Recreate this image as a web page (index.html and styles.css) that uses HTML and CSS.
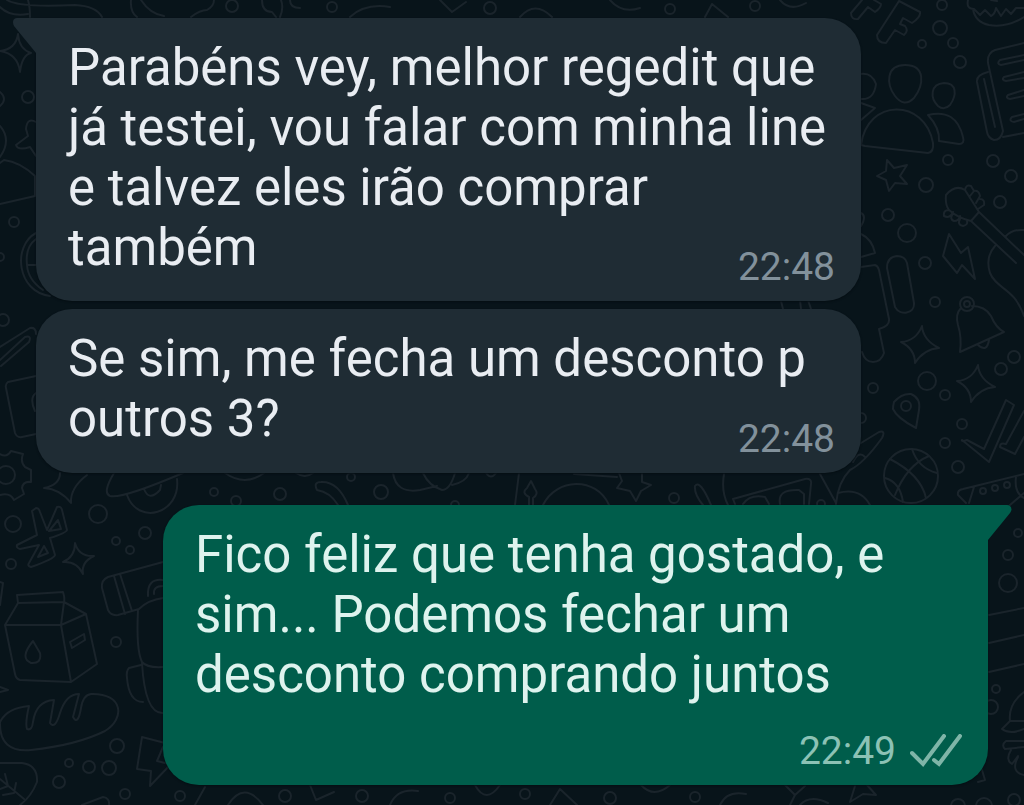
FILE: index.html
```html
<!DOCTYPE html>
<html lang="pt-BR">
<head>
<meta charset="utf-8">
<meta name="viewport" content="width=device-width, initial-scale=1">
<title>Conversa</title>
<link rel="stylesheet" href="styles.css">
</head>
<body>
<main class="chat">
  <svg class="wallpaper" viewBox="0 0 1024 805" preserveAspectRatio="xMidYMid slice" aria-hidden="true">
    <defs>
      <path id="spark" d="M2-19Q3-5 19 3Q4 4-5 18Q-5 4-19-3Q-4-4 2-19Z"/>
    </defs>
    <!-- top edge -->
    <path d="M0 7Q10 17 28 14M28 0Q30 7 30 17M7 0Q20 8 75 5Q96 6 102 17M131 0Q130 12 137 17M141 0Q150 14 164 16M191 17Q200 10 207 10Q214 6 214 0M262 0Q262 12 272 12L276 17M281 0Q284 8 280 17M290 0Q290 8 300 8M350 17Q365 3 390 7M440 0L452 12L466 2M520 17Q535 0 552 17M610 0Q622 14 640 8M705 17L712 4L728 17M780 0Q790 12 806 3"/>
    <circle cx="232" cy="6" r="6"/><circle cx="332" cy="7" r="5"/><circle cx="490" cy="8" r="6"/><circle cx="670" cy="9" r="5"/><circle cx="755" cy="6" r="5"/>
    <!-- letters -->
    <path d="M862 0L851 13Q851 20 858 19L868 7L875 12Q881 8 881 4L874 0M899 1L877 35Q877 43 886 43L895 30L904 35Q909 31 905 26L900 24L903 18L912 23Q921 17 920 12Z"/>
    <!-- cupcake -->
    <path d="M968 0Q966 9 974 9L980 15L985 10L991 16Q995 14 996 8L1001 16L1006 9L1011 14L1016 8H1024M973 9Q975 22 989 25Q1007 28 1024 17M991 0L997 1"/>
    <circle cx="942" cy="5" r="5"/><circle cx="940" cy="28" r="7"/><circle cx="922" cy="44" r="4"/><circle cx="953" cy="43" r="5"/><circle cx="960" cy="62" r="6"/>
    <!-- people -->
    <path d="M905 65C886 65 886 84 895 96Q904 108 914 98C924 85 926 65 905 65ZM861 145C867 98 925 98 933 143Q934 152 928 153L865 146ZM944 83C930 84 930 98 938 106Q944 111 950 105C957 95 957 83 944 83ZM928 115Q956 108 963 137Q965 144 959 144L939 141Q940 128 928 115ZM860 74Q872 72 876 84Q874 100 861 99M861 103L875 108L861 120"/>
    <!-- newspaper -->
    <path d="M1024 43L995 50Q987 53 988 63L1003 131Q1001 140 994 140Q988 138 987 132L977 82Q976 75 988 72M1003 137L1024 133M984 79L995 127M1024 55L1000 60Q996 64 1001 65L1024 60M1024 72L1004 77Q1001 80 1006 81L1024 78M1024 90L1008 95Q1005 98 1010 99L1024 96M1024 114L1012 117Q1008 121 1014 122L1024 119"/>
    <path d="M887 160L894 168L907 165L900 176L907 184L895 183L889 191L886 180L877 176L886 171Z"/>
    <circle cx="948" cy="160" r="5"/><circle cx="993" cy="161" r="6"/><circle cx="1011" cy="176" r="6"/><circle cx="1000" cy="202" r="6"/><circle cx="926" cy="185" r="7"/><circle cx="888" cy="215" r="6"/><circle cx="907" cy="233" r="9"/>
    <!-- guitar -->
    <path d="M946 195Q955 184 965 190L979 212L971 221Q958 218 949 210Q945 205 946 195ZM979 212L1024 255M971 221L1016 263M1005 237Q1012 229 1024 230M995 246Q985 257 990 273C997 290 1014 287 1024 316M965 190Q966 184 971 186L974 191L970 196M974 191Q979 190 980 196L976 203M980 199Q985 199 984 205L978 209M949 210Q943 210 944 216Q950 219 953 212M953 214Q949 219 954 221Q959 221 960 216M960 219Q957 225 963 226Q968 225 967 221"/>
    <path d="M949 234L943 256L957 273L962 265L975 279L968 247L961 253Z"/>
    <!-- glove and baton -->
    <path d="M861 267L875 265Q878 266 879 270L889 319Q890 326 879 329L884 353Q881 362 873 362Q865 362 862 352M897 256Q887 257 887 268L895 307C900 316 915 314 914 303L907 263Q905 256 897 256ZM861 234Q872 239 875 253L861 257M861 213Q867 216 861 226M781 301L783 309M800 300L801 309M808 300L811 309"/>
    <circle cx="925" cy="263" r="6"/><circle cx="935" cy="302" r="5"/>
    <!-- bell -->
    <path d="M961 308Q955 314 958 325Q962 338 960 352L1004 332Q996 328 991 316Q985 306 972 306M978 345Q987 353 989 340"/><circle cx="967" cy="304" r="7"/><circle cx="967" cy="304" r="3"/>
    <use href="#spark" x="920" y="345"/><use href="#spark" x="976" y="384"/>
    <circle cx="927" cy="381" r="9"/><circle cx="945" cy="395" r="5"/><circle cx="873" cy="388" r="5"/><circle cx="1001" cy="369" r="6"/><circle cx="1014" cy="357" r="6"/><circle cx="962" cy="424" r="5"/><circle cx="945" cy="443" r="5"/><circle cx="958" cy="467" r="6"/><circle cx="861" cy="418" r="5"/>
    <path d="M894 402Q902 393 911 394Q921 398 919 410L916 428Q897 418 893 409Q893 406 894 402Z"/><circle cx="906" cy="406" r="5"/>
    <!-- big ticks -->
    <path d="M962 440L989 462L1014 405L1006 400L984 449L967 440Q961 442 962 440ZM1024 411L1006 444Q1000 442 1000 447L1015 454L1024 437"/>
    <!-- ball -->
    <circle cx="911" cy="476" r="27"/><path d="M890 459Q921 475 926 498M895 495Q907 465 929 456M912 449Q918 468 937 473M885 478Q900 482 903 502"/>
    <!-- surfboard and tray -->
    <path d="M861 443L879 432Q886 430 882 438Q864 463 850 470Q838 482 836 504M853 462Q859 450 865 457M838 493Q860 487 870 505M724 474Q721 492 728 505M735 504L733 499L805 479Q812 478 811 484L809 504M743 504Q750 494 765 497L769 504M780 504Q777 489 799 490L804 494V504M820 474L836 503M958 495Q957 490 963 489L1024 474M958 495L966 503M969 503L974 487M1016 477Q1014 493 1024 498M1010 505L1024 493"/>
    <circle cx="983" cy="491" r="3"/><circle cx="995" cy="488" r="3"/><circle cx="1007" cy="485" r="3"/><circle cx="821" cy="504" r="4"/>
    <!-- strip between bubbles -->
    <path d="M114 473Q102 493 110 496Q122 499 183 473M127 495C138 526 181 514 177 479M144 489Q149 502 160 490L161 485M225 473Q245 487 264 473M296 473Q305 479 313 473M338 505Q330 492 317 490Q313 482 321 482Q338 481 348 505M393 473Q396 494 420 490L437 486M423 473Q429 486 442 490Q450 490 455 473M452 485Q466 482 469 473M486 473Q491 480 496 473M519 473L515 505M529 505V497Q521 493 527 488L531 481L535 489Q539 494 533 498V505M543 505C556 478 596 476 609 505M574 474L617 477M619 473L622 481L617 488L630 491L636 501L641 491L651 485L642 482V473M703 505Q694 494 695 486Q700 479 711 505"/>
    <circle cx="214" cy="492" r="4"/><circle cx="236" cy="501" r="5"/><circle cx="280" cy="494" r="6"/><circle cx="351" cy="477" r="4"/><circle cx="381" cy="492" r="7"/><circle cx="674" cy="498" r="5"/><circle cx="455" cy="505" r="4"/>
    <!-- left side -->
    <path d="M18 34Q19 49 31 53Q22 55 20 72Q18 54 0 51Q16 49 18 34ZM0 92Q8 99 0 106M0 126Q12 140 0 157M36 122Q27 117 26 129L28 136L16 145Q18 151 30 147L36 156M0 163L4 160Q20 162 35 176V196L0 204M36 233C12 246 17 292 50 296M36 239Q25 247 27 265H36M27 265Q28 280 43 290M0 347L30 328Q36 327 36 334M0 360L25 337Q32 335 29 342L1 366M36 376L8 382Q5 384 6 388L15 433Q17 438 22 437L36 434M36 393Q29 398 35 411"/>
    <circle cx="28" cy="97" r="6"/><circle cx="14" cy="222" r="5"/><circle cx="0" cy="257" r="4"/><circle cx="3" cy="320" r="6"/>
    <!-- gear -->
    <path d="M0 454Q7 458 11 451L23 454Q20 462 25 467L31 470V482Q23 481 22 488L24 494L14 500Q10 492 0 495"/><circle cx="6" cy="475" r="9"/>
    <path d="M60 473Q60 485 44 488Q60 489 71 503Q70 488 87 475"/>
    <path d="M32 511L36 508Q39 508 40 512L47 530L57 507Q61 506 62 510L67 530Q66 533 50 538L55 555Q54 559 31 567Q27 566 29 563L39 545L20 549Q16 548 17 545L37 535ZM49 531L58 520L61 529ZM38 557L44 546L48 553Z"/>
    <circle cx="13" cy="524" r="8"/><circle cx="98" cy="514" r="9"/><circle cx="11" cy="564" r="5"/><circle cx="116" cy="541" r="4"/><circle cx="130" cy="550" r="4"/><circle cx="145" cy="533" r="6"/>
    <path d="M75 543Q79 557 94 556Q81 562 83 574Q77 561 63 562Q75 557 75 543Z"/>
    <!-- milk carton -->
    <path d="M18 603L17 595L63 592Q65 598 64 602L61 625L5 625L18 603L64 602L86 614L97 664L71 682L20 680Q16 679 15 674L5 625M61 625L86 614M61 625L71 682M33 641Q19 658 31 663Q42 664 40 653ZM70 642L84 634L85 640L72 648ZM0 582L3 583L0 605"/>
    <!-- flask and backpack -->
    <path d="M163 562L108 577Q101 580 102 588L108 610Q111 616 118 615L139 609Q148 600 163 598M114 576L125 614M120 574L132 611M148 596Q147 578 163 580M154 594Q153 586 163 586M138 610Q136 650 142 662Q147 668 163 667M141 665L129 668Q126 671 127 678Q129 702 143 702M142 663Q145 714 163 713"/>
    <circle cx="116" cy="642" r="5"/><path d="M0 687L8 690L0 692"/>
    <!-- bread -->
    <path d="M0 722Q7 708 29 706Q25 723 27 729Q32 731 33 722Q36 701 54 700L50 723Q55 730 60 713Q66 694 79 694L73 717Q78 726 81 708Q83 695 91 694C124 693 125 719 105 731Q77 745 31 750Q-1 753 0 722ZM0 763H22Q38 765 37 782Q31 797 20 805M0 779L24 799M5 774L8 786L0 789M16 783L14 793L3 795M82 805L103 797Q110 798 109 805M142 737L137 769L151 771L150 786L170 765M142 737L165 743M163 747L157 761L165 763"/>
    <circle cx="117" cy="746" r="7"/><circle cx="69" cy="763" r="4"/><circle cx="89" cy="767" r="6"/><circle cx="109" cy="768" r="7"/><circle cx="59" cy="782" r="6"/><circle cx="125" cy="794" r="5"/>
    <!-- lower edge -->
    <path d="M195 805L205 787M228 805Q244 780 263 805M310 785L316 800L334 792M390 805Q397 788 418 791M475 785Q486 805 500 785M550 805L560 789L577 805M641 785Q654 799 670 785M720 805Q727 790 746 794M785 785L795 795L790 805M795 795L805 786M800 805Q810 794 828 803M855 786L850 802L863 794L876 795L867 785"/>
    <circle cx="180" cy="796" r="5"/><circle cx="285" cy="796" r="6"/><circle cx="362" cy="796" r="6"/><circle cx="450" cy="798" r="5"/><circle cx="525" cy="794" r="5"/><circle cx="610" cy="798" r="6"/><circle cx="695" cy="797" r="5"/><circle cx="958" cy="806" r="7"/><circle cx="984" cy="806" r="8"/><circle cx="1014" cy="800" r="6"/>
    <!-- right edge -->
    <circle cx="1018" cy="533" r="4"/><circle cx="1008" cy="555" r="5"/><circle cx="1008" cy="583" r="9"/><circle cx="996" cy="689" r="4"/><circle cx="991" cy="707" r="7"/>
    <path d="M989 615L1024 608M989 643L1024 635M989 672L1024 664M1024 692Q1008 704 1010 721H1024M1010 721L1002 729Q1010 735 1024 729M1024 741H1006Q1001 745 1005 749L1024 747M1011 750Q1005 760 1012 764L1018 756M1024 775Q1010 772 1018 757M978 782L985 780L982 770"/>
  </svg>

  <article class="bubble bubble--in bubble--first">
    <svg class="tail tail--in" viewBox="0 0 24 35" aria-hidden="true"><path d="M24 0H5C1 0 0 4 2 8L24 35Z"/></svg>
    <p class="text">Parabéns vey, melhor regedit que já testei, vou falar com minha line e talvez eles irão comprar também</p>
    <footer class="meta"><time>22:48</time></footer>
  </article>

  <article class="bubble bubble--in">
    <p class="text">Se sim, me fecha um desconto p outros 3?</p>
    <footer class="meta"><time>22:48</time></footer>
  </article>

  <article class="bubble bubble--out">
    <svg class="tail tail--out" viewBox="0 0 24 35" aria-hidden="true"><path d="M0 0H19C23 0 25 4 22 8L0 35Z"/></svg>
    <p class="text">Fico feliz que tenha gostado, e sim... Podemos fechar um desconto comprando juntos</p>
    <footer class="meta">
      <time>22:49</time>
      <svg class="ticks" viewBox="0 0 52 34" role="img" aria-label="Entregue"><path d="M2 19L13 30L34 2M24 26L29 30L50 2"/></svg>
    </footer>
  </article>
</main>
</body>
</html>
```

FILE: styles.css
```css
* {
  box-sizing: border-box;
}

body {
  margin: 0;
  background: #08141a;
  font-family: Roboto, "Liberation Sans", sans-serif;
}

.chat {
  position: relative;
  display: flex;
  flex-direction: column;
  align-items: flex-start;
  gap: 8px;
  min-height: 100vh;
  padding: 18px 36px 20px;
  overflow: hidden;
}

.wallpaper {
  position: absolute;
  inset: 0;
  width: 100%;
  height: 100%;
  fill: none;
  stroke: #1a242b;
  stroke-width: 2;
  stroke-linecap: round;
  stroke-linejoin: round;
}

.bubble {
  position: relative;
  width: 100%;
  max-width: 825px;
  padding: 20px 32px 24px;
  border-radius: 36px;
  box-shadow: 0 1px 2px #050e13;
}

.bubble--in {
  background: #1f2c34;
  color: #e9edf2;
}

.bubble--first {
  padding-bottom: 23px;
  border-top-left-radius: 0;
}

.bubble--out {
  align-self: flex-end;
  margin-top: 24px;
  padding-bottom: 80px;
  border-top-right-radius: 0;
  background: #005d4b;
  color: #def3ee;
}

.tail {
  position: absolute;
  top: 0;
  width: 24px;
  height: 35px;
}

.tail--in {
  right: 100%;
  fill: #1f2c34;
}

.tail--out {
  left: 100%;
  fill: #005d4b;
}

.text {
  margin: 0;
  font-size: 51px;
  line-height: 60px;
}

.meta {
  position: absolute;
  right: 26px;
  bottom: 10px;
  display: flex;
  align-items: center;
  gap: 14px;
  color: #82919b;
  font-size: 39px;
  line-height: 48px;
}

.bubble--out .meta {
  color: #8cc2b5;
}

.ticks {
  width: 52px;
  height: 34px;
  fill: none;
  stroke: #7fb5a8;
  stroke-width: 4;
  stroke-linecap: round;
}
```
